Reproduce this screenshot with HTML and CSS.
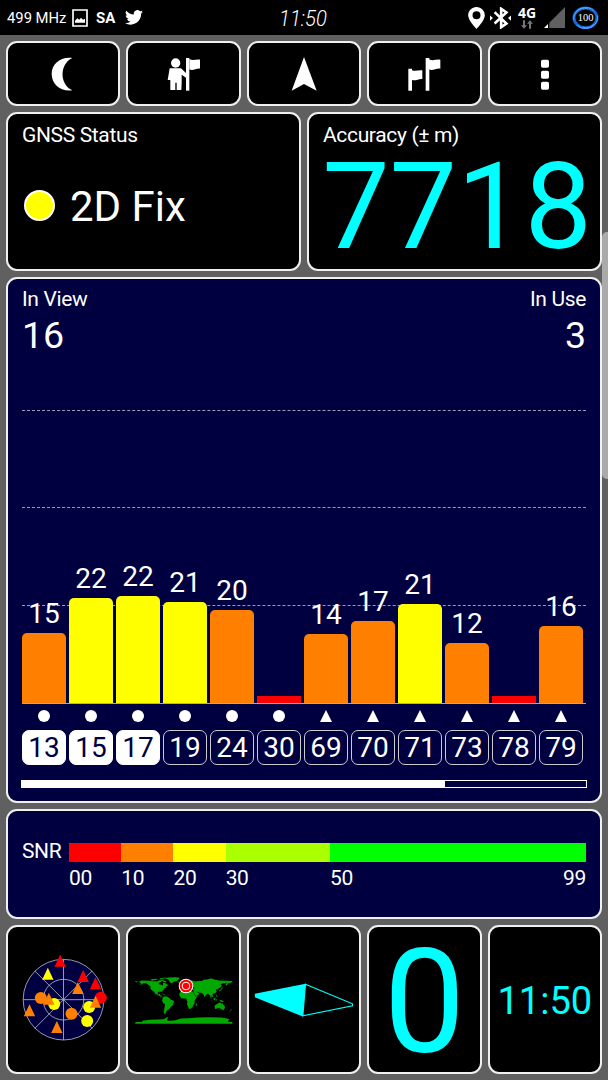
FILE: index.html
```html
<!DOCTYPE html>
<html lang="en">
<head>
  <meta charset="UTF-8">
  <title>GNSS Status</title>
  <link rel="stylesheet" href="styles.css">
</head>
<body>

  <header class="status-bar">
    <div class="status-left">
      <span class="cpu">499 MHz</span>
      <svg class="icon-picture" viewBox="0 0 48 54"><path fill="none" stroke="#fff" stroke-width="5" d="M3 3h42v48H3z"/><path fill="#fff" d="M9 41V35l7-7 6 4 5-6 6 6 6-3v12z"/></svg>
      <span class="sa">SA</span>
      <svg class="icon-bird" viewBox="0 0 24 20"><path fill="#fff" d="M24 2.4a10 10 0 0 1-2.8.8A5 5 0 0 0 23.300.5a10 10 0 0 1-3.100 1.200A4.900 4.900 0 0 0 11.800 6.100 14 14 0 0 1 1.700 1a4.900 4.900 0 0 0 1.500 6.500 5 5 0 0 1-2.200-.6 4.900 4.900 0 0 0 3.900 4.900 5 5 0 0 1-2.200.1 4.900 4.900 0 0 0 4.600 3.400A9.900 9.900 0 0 1 0 17.300a14 14 0 0 0 7.500 2.200c9.100 0 14.300-7.700 14-14.600A10 10 0 0 0 24 2.400z"/></svg>
    </div>
    <span class="status-time">11:50</span>
    <div class="status-right">
      <svg class="icon-pin" viewBox="0 0 50 66"><path fill="#fff" fill-rule="evenodd" d="M25 0C11 0 0 11 0 25c0 16 25 41 25 41s25-25 25-41C50 11 39 0 25 0zm0 13a12 12 0 1 1 0 24 12 12 0 0 1 0-24z"/></svg>
      <svg class="icon-bluetooth" viewBox="0 0 64 66"><path fill="none" stroke="#fff" stroke-width="8" d="M14 15l36 35-16 11V5l16 11-36 34"/><path fill="#fff" d="M0 25l9 8-9 8zM64 25l-9 8 9 8z"/></svg>
      <div class="network">
        <span>4G</span>
        <svg viewBox="0 0 36 26"><path fill="#777" d="M6 0h6v15h6L9 26 0 15h6zM24 26h6V11h6L27 0l-9 11h6z"/></svg>
      </div>
      <svg class="icon-signal" viewBox="0 0 63 63"><path fill="#606060" d="M63 0v63H16V47z"/><path fill="#fff" d="M0 63l12-12v12z"/></svg>
      <div class="battery">
        <svg viewBox="0 0 82 72"><ellipse cx="41" cy="36" rx="35" ry="30" fill="none" stroke="#1668d8" stroke-width="9"/><path fill="none" stroke="#58a5ff" stroke-width="3" d="M5 42C4 16 26 3 48 7M77 29c4 27-19 42-44 36M13 18C24 3 50 0 65 13M69 54C54 73 28 72 15 57"/></svg>
        <span>100</span>
      </div>
    </div>
  </header>

  <main class="screen">

    <nav class="row five">
      <a class="card button"><svg viewBox="130 160 120 120"><path d="M218 172C181 168 156 190 156 220s26 54 62 49c-39-18-39-79 0-97z"/></svg></a>
      <a class="card button"><svg viewBox="491 160 120 120"><circle cx="526" cy="187" r="14"/><path d="M508 203h34l15 14v14l-13-9v24l-1 22h-14v-22h-4v22h-15v-30h-8z"/><path d="M557 172h10v98h-10z"/><path d="M567 175c10 7 21 0 32 2v27c-11-2-22 9-32 2z"/></svg></a>
      <a class="card button"><svg viewBox="852 160 120 120"><path d="M912 169l38 101-38-20-37 20z"/></svg></a>
      <a class="card button"><svg viewBox="302 160 120 120"><path d="M315 204h11v66h-11zM367 172h11v98h-11z"/><path d="M325 208c10 6 21-1 32 1v26c-11-2-22 8-32 2zM377 176c11 6 22-1 34 1v27c-12-2-24 8-34 2z"/></svg></a>
      <a class="card button"><svg viewBox="663 160 120 120"><rect x="711" y="177" width="24" height="24" rx="5"/><rect x="711" y="210" width="24" height="24" rx="5"/><rect x="711" y="243" width="24" height="24" rx="5"/></svg></a>
    </nav>

    <section class="row two">
      <div class="card panel">
        <div class="label">GNSS Status</div>
        <div class="fix"><span class="led"></span>2D Fix</div>
      </div>
      <div class="card panel">
        <div class="label">Accuracy (± m)</div>
        <div class="accuracy">7718</div>
      </div>
    </section>

    <section class="card panel navy">
      <div class="counts">
        <div><div class="label">In View</div><div class="count">16</div></div>
        <div class="in-use"><div class="label">In Use</div><div class="count">3</div></div>
      </div>

      <div class="chart">
        <div class="grid-lines"><i></i><i></i><i></i></div>
        <div class="bars">
          <div class="bar orange"><span>15</span><b style="height: 70px"></b></div>
          <div class="bar yellow"><span>22</span><b style="height: 105px"></b></div>
          <div class="bar yellow"><span>22</span><b style="height: 107px"></b></div>
          <div class="bar yellow"><span>21</span><b style="height: 101px"></b></div>
          <div class="bar orange"><span>20</span><b style="height: 93px"></b></div>
          <div class="bar red"><b style="height: 7px"></b></div>
          <div class="bar orange"><span>14</span><b style="height: 69px"></b></div>
          <div class="bar orange"><span>17</span><b style="height: 82px"></b></div>
          <div class="bar yellow"><span>21</span><b style="height: 99px"></b></div>
          <div class="bar orange"><span>12</span><b style="height: 60px"></b></div>
          <div class="bar red"><b style="height: 7px"></b></div>
          <div class="bar orange"><span>16</span><b style="height: 77px"></b></div>
        </div>
      </div>

      <div class="sats">
        <div class="sat gps used"><i></i><span>13</span></div>
        <div class="sat gps used"><i></i><span>15</span></div>
        <div class="sat gps used"><i></i><span>17</span></div>
        <div class="sat gps"><i></i><span>19</span></div>
        <div class="sat gps"><i></i><span>24</span></div>
        <div class="sat gps"><i></i><span>30</span></div>
        <div class="sat glonass"><i></i><span>69</span></div>
        <div class="sat glonass"><i></i><span>70</span></div>
        <div class="sat glonass"><i></i><span>71</span></div>
        <div class="sat glonass"><i></i><span>73</span></div>
        <div class="sat glonass"><i></i><span>78</span></div>
        <div class="sat glonass"><i></i><span>79</span></div>
      </div>

      <div class="pager"><div style="width: 75%"></div></div>
    </section>

    <section class="card panel navy snr">
      <div class="label">SNR</div>
      <div class="scale">
        <div class="s10 red"><b></b><span>00</span></div>
        <div class="s10 orange"><b></b><span>10</span></div>
        <div class="s10 yellow"><b></b><span>20</span></div>
        <div class="s20 lime"><b></b><span>30</span></div>
        <div class="s49 green"><b></b><span>50</span><span class="end">99</span></div>
      </div>
    </section>

    <section class="row five">
      <div class="card tile">
        <svg class="sky" viewBox="1.5 0 285 300">
          <circle cx="144" cy="149" r="121" fill="#000040"/>
          <g fill="none" stroke="#b4b4c8" stroke-width="2.500">
            <circle cx="144" cy="149" r="121"/>
            <circle cx="144" cy="149" r="61"/>
            <path d="M23 149h242M144 28v242M58 63l172 172M230 63L58 235"/>
          </g>
          <g fill="#ff0">
            <circle cx="116" cy="162" r="18"/>
            <circle cx="221" cy="171" r="18"/>
            <circle cx="215" cy="213" r="18"/>
            <path d="M97 53l17 36H80z"/>
          </g>
          <g fill="red">
            <circle cx="256" cy="143" r="18"/>
            <path d="M134 14l17 36h-34zM203 60l17 36h-34zM240 82l17 36h-34z"/>
          </g>
          <g fill="#ff8000">
            <circle cx="76" cy="144" r="18"/>
            <circle cx="168" cy="191" r="18"/>
            <path d="M100 128l17 36H83zM187 96l17 36h-34zM240 137l17 36h-34zM42 163l17 36H25zM124 213l17 36h-34z"/>
          </g>
        </svg>
      </div>
      <div class="card tile">
        <svg class="map" viewBox="-4 0 330 210">
          <!-- longitude / latitude units, north up -->
          <g fill="#00a800" transform="translate(160.5 103.5) scale(.808)">
            <path d="M-168-66L-156-71-128-70-115-68-95-68-94-72-85-69-82-67-94-60-92-57-82-55-79-51-77-57-78-62-70-61-64-58-56-52-66-50-65-48-60-46-70-43-74-40-76-35-81-31-80-26-82-29-90-30-97-27-97-21-94-18-90-21-87-21-89-16-83-15-83-10-78-9-82-8-92-14-105-20-113-31-117-33-124-40-124-48-132-55-140-60-150-60-158-56-165-54-158-59-165-62-161-65z"/>
            <path d="M-125-74L-115-76-95-77-104-72-118-70zM-90-79L-65-82-74-77-88-76zM-90-74L-80-73-65-67-64-63-74-64-78-69-88-70z"/>
            <path d="M-72-78L-60-82-30-83-15-81-20-74-25-70-40-65-44-60-50-62-54-68-58-75z"/>
            <path d="M-85-22L-75-20-68-18-74-18zM-180-69L-170-66-174-64-180-65zM-24-66L-14-66-15-64-22-63z"/>
            <path d="M-78-8L-72-12-62-10-52-5-50 0-36 6-39 14-41 22-48 26-54 34-58 38-63 41-66 46-69 51-66 55-72 53-75 46-72 32-70 18-76 14-81 5-79-2z"/>
            <path d="M-17-15L-16-24-6-35 10-37 11-33 20-31 31-31 34-28 43-12 51-12 40 3 40 15 35 22 32 28 26 34 19 34 12 18 13 8 9-2 8-4-8-4zM44 24L44 17 49 13 47 25z"/>
            <path d="M-9-37L-9-43-1-44-4-48 4-52 9-54 9-57 5-60 12-65 20-70 30-71 42-67 55-69 68-69 72-73 85-74 104-78 113-74 130-71 160-70 180-69 180-65 170-60 163-60 162-55 156-51 156-58 160-62 142-59 136-54 141-52 138-46 131-43 127-39 129-35 126-34 125-39 118-39 122-37 119-35 122-30 117-24 108-21 106-18 109-12 105-9 100-13 104-1 98-9 98-16 94-17 90-22 80-15 78-8 73-18 70-21 66-25 57-25 50-30 52-24 59-22 52-16 43-13 35-28 36-36 27-37 27-40 41-42 37-45 31-46 28-42 23-38 20-40 13-45 18-40 16-38 9-44 3-43-1-37z"/>
            <path d="M-5-50L1-51-2-57-6-58zM52-71L68-77 58-73zM95-81L104-79 94-79zM140-75L150-75 142-73zM141-45L145-43 141-39 140-35 131-31 131-34 138-37z"/>
            <path d="M95-5L106 6 103 4zM105 7L115 9 106 8zM109-2L117-7 118 0 114 4zM119 0L125-1 121 5zM120-18L123-18 126-7 122-10zM131 1L141 3 150 10 138 8z"/>
            <path d="M114 22L122 18 130 12 137 12 140 17 142 11 146 19 153 26 150 37 143 39 137 34 130 32 116 35zM145 41L148 41 146 44zM173 35L178 38 175 41zM172 41L174 42 168 46z"/>
            <path d="M-180 84L-155 84-155 79-125 75-100 74-75 73-66 68-58 64-62 74-60 79-35 78-10 71 20 70 50 67 90 66 140 67 170 72 165 78 165 84 180 84 180 90-180 90z"/>
          </g>
          <circle cx="167" cy="63" r="22" fill="#fff"/>
          <circle cx="167" cy="63" r="19" fill="red"/>
          <circle cx="167" cy="63" r="11.500" fill="none" stroke="#fff" stroke-width="3"/>
        </svg>
      </div>
      <div class="card tile">
        <svg class="compass" viewBox="36.600 148.500 312 180">
          <path fill="#0ff" d="M45 220l152-30-8 98-144-58z"/>
          <path fill="none" stroke="#0ff" stroke-width="3.500" d="M197 191l141 59v6l-149 30z"/>
        </svg>
      </div>
      <div class="card tile speed">0</div>
      <div class="card tile clock">11:50</div>
    </section>

  </main>

  <div class="scroll-thumb"></div>

</body>
</html>
```

FILE: styles.css
```css
* {
  box-sizing: border-box;
}

body {
  margin: 0;
  height: 1080px;
  background: #606060;
  color: #fff;
  font-family: Roboto, sans-serif;
  overflow: hidden;
}

svg {
  display: block;
}

/* status bar */
.status-bar {
  display: grid;
  grid-template-columns: 1fr auto 1fr;
  align-items: center;
  height: 35px;
  padding: 0 9px 0 7px;
  background: #000;
}

.status-left,
.status-right {
  display: flex;
  align-items: center;
}

.status-right {
  justify-content: flex-end;
}

.cpu {
  width: 65px;
  font-size: 14.800px;
}

.icon-picture {
  width: 16px;
  height: 18px;
}

.sa {
  width: 29px;
  margin-left: 8px;
  font-size: 15px;
  font-weight: 700;
}

.icon-bird {
  width: 18px;
  height: 15px;
}

.status-time {
  padding-top: 2px;
  font-size: 22px;
  font-weight: 300;
  font-style: italic;
  transform: scaleX(0.92);
}

.icon-pin {
  width: 17px;
  height: 22px;
}

.icon-bluetooth {
  width: 21px;
  height: 22px;
  margin-left: 5px;
}

.network {
  display: flex;
  flex-direction: column;
  align-items: center;
  width: 18px;
  margin-left: 7px;
  font: 700 14px/13px "Open Sans", sans-serif;
}

.network svg {
  width: 12px;
  height: 9px;
  margin-top: 1px;
}

.icon-signal {
  width: 21px;
  height: 21px;
  margin-left: 8px;
}

.battery {
  position: relative;
  width: 27px;
  height: 24px;
  margin-left: 7px;
}

.battery span {
  position: absolute;
  inset: 0;
  text-align: center;
  font: 10.500px/23px "Liberation Serif", serif;
}

/* cards */
.screen {
  display: grid;
  grid-template-rows: 65px 159px 526px 110px 149px;
  gap: 6px;
  padding: 6px;
}

.row {
  display: grid;
  gap: 6px;
}

.five {
  grid-template-columns: repeat(5, 1fr);
}

.two {
  grid-template-columns: repeat(2, 1fr);
}

.card {
  min-width: 0;
  border: 2px solid #f0f0f0;
  border-radius: 11px;
  background: #000;
}

.panel {
  padding: 8px 14px 0;
}

.navy {
  background: #000040;
}

.button,
.tile {
  display: flex;
  align-items: center;
  justify-content: center;
}

.button svg {
  width: 40px;
  height: 40px;
  fill: #fff;
}

.label {
  font-size: 21px;
  line-height: 24px;
  letter-spacing: -0.350px;
}

.row .label {
  padding-top: 1px;
}

.fix {
  display: flex;
  align-items: center;
  gap: 15px;
  margin-top: 36px;
  padding-left: 2px;
  font-size: 42px;
  line-height: 48px;
}

.led {
  width: 31px;
  height: 31px;
  margin-top: -3px;
  border: 2px solid #fff;
  border-radius: 50%;
  background: #ff0;
}

.accuracy {
  display: flex;
  justify-content: center;
  margin-right: -5px;
  color: #0ff;
  font-size: 120px;
  line-height: 120px;
}

/* satellites */
.counts {
  display: flex;
  justify-content: space-between;
}

.count {
  margin-top: 2px;
  font-size: 37.500px;
  line-height: 44px;
}

.in-use {
  text-align: right;
}

.chart {
  position: relative;
  height: 347px;
  border-bottom: 1px solid #aaa;
}

.grid-lines {
  position: absolute;
  inset: 0 0 1px;
  display: flex;
  flex-direction: column;
  justify-content: flex-end;
}

.grid-lines i {
  height: 97.500px;
  border-top: 1px dashed #9a9ab8;
}

.bars,
.sats {
  display: grid;
  grid-template-columns: repeat(12, 47px);
}

.bars {
  position: relative;
  height: 100%;
}

.bar {
  display: flex;
  flex-direction: column;
  justify-content: flex-end;
  padding-right: 3px;
}

.bar span {
  margin-bottom: 5px;
  font-size: 28px;
  line-height: 28px;
  text-align: center;
}

.bar b {
  border-radius: 5px 5px 0 0;
}

.bar.red b {
  border-radius: 0;
}

.red b {
  background: red;
}

.orange b {
  background: #ff8000;
}

.yellow b {
  background: #ff0;
}

.lime b {
  background: #af0;
}

.green b {
  background: #0f0;
}

.sats {
  padding-top: 6px;
}

.sat {
  display: flex;
  flex-direction: column;
  align-items: center;
  gap: 8px;
  padding-right: 3px;
}

.sat i {
  width: 12px;
  height: 12px;
  background: #fff;
}

.gps i {
  border-radius: 50%;
}

.glonass i {
  clip-path: polygon(50% 0, 100% 100%, 0 100%);
}

.sat span {
  width: 44px;
  height: 35px;
  border: 1px solid #ccc;
  border-radius: 7px;
  font-size: 28px;
  line-height: 33px;
  text-align: center;
}

.used span {
  border-color: #fff;
  background: #fff;
  color: #000040;
}

.pager {
  height: 8px;
  margin: 15px -1px 0;
  border: 1px solid #fff;
}

.pager div {
  height: 100%;
  background: #fff;
}

/* SNR scale */
.snr {
  display: flex;
  padding-top: 28px;
}

.snr .label {
  width: 47px;
}

.scale {
  display: flex;
  flex: 1;
  padding-top: 4px;
}

.scale > div {
  display: flex;
  flex-wrap: wrap;
  justify-content: space-between;
  align-content: flex-start;
  font-size: 21px;
  line-height: 24px;
  letter-spacing: -0.350px;
}

.scale b {
  width: 100%;
  height: 19px;
  margin-bottom: 4px;
}

.s10 {
  flex: 10;
}

.s20 {
  flex: 20;
}

.s49 {
  flex: 49;
}

/* bottom tiles */
.sky {
  width: 95px;
  height: 100px;
}

.map {
  width: 110px;
  height: 70px;
}

.compass {
  width: 104px;
  height: 60px;
}

.speed {
  padding-top: 5px;
  color: #0ff;
  font-size: 145px;
  line-height: 140px;
}

.clock {
  padding-top: 2px;
  color: #0ff;
  font-size: 38px;
}

.scroll-thumb {
  position: absolute;
  top: 232px;
  right: 0;
  width: 6px;
  height: 247px;
  border-radius: 5px 0 0 5px;
  background: #aaa;
}
```
